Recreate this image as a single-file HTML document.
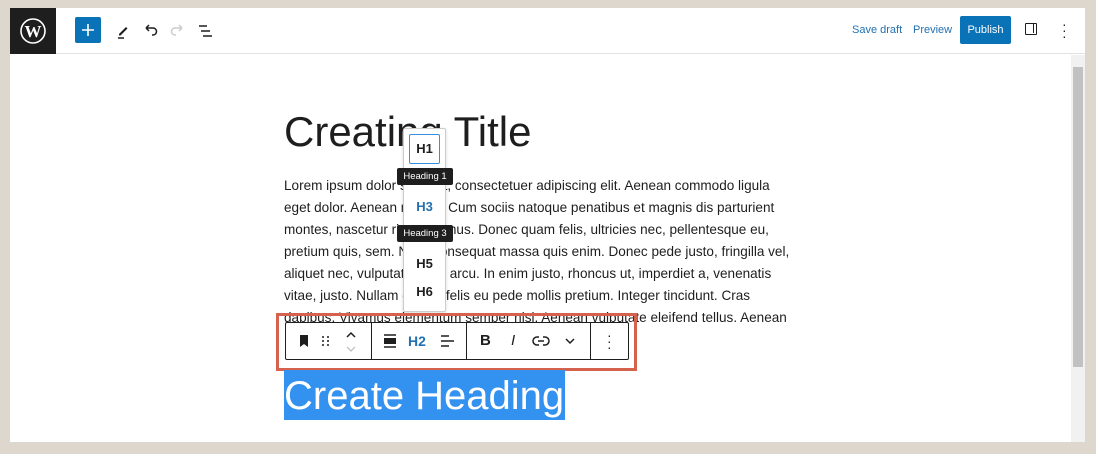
<!DOCTYPE html>
<html><head><meta charset="utf-8"><style>
*{margin:0;padding:0;box-sizing:border-box}
body{width:1096px;height:454px;background:#ddd7cd;position:relative;overflow:hidden;font-family:"Liberation Sans",sans-serif}
.app{position:absolute;left:10px;top:8px;width:1075px;height:434px;background:#fff;overflow:hidden}
.hdr{position:absolute;left:0;top:0;width:1075px;height:46px;border-bottom:1px solid #e2e2e2}
.wp{position:absolute;left:0;top:0;width:46px;height:46px;background:#1e1e1e}
.p{position:absolute;left:274px;font-size:13.55px;color:#1e1e1e;white-space:nowrap;line-height:22px}
.abs{position:absolute}
</style></head><body>
<div class="app">
 <div class="hdr">
  <div class="wp"><svg width="46" height="46" viewBox="0 0 46 46"><circle cx="23" cy="23" r="12" fill="none" stroke="#fff" stroke-width="1.6"/><text x="23" y="29" text-anchor="middle" font-family="Liberation Serif" font-weight="bold" font-size="17" fill="#fff">W</text></svg></div>
  <div class="abs" style="left:65px;top:9px;width:26px;height:26px;background:#0a73b8;border-radius:2px"><svg width="26" height="26"><path d="M13 7v12M7 13h12" stroke="#fff" stroke-width="1.6"/></svg></div>
  <svg class="abs" style="left:101px;top:11px" width="24" height="24" viewBox="0 0 24 24"><path d="M8 15l7-7 1.5 1.5-7 7H8z" fill="#1e1e1e"/><path d="M7 19h6" stroke="#1e1e1e" stroke-width="1.5"/></svg>
  <svg class="abs" style="left:128px;top:11px" width="24" height="24" viewBox="0 0 24 24"><path d="M8 9h7a3.5 3.5 0 0 1 0 7h-1M8 9l3-3M8 9l3 3" fill="none" stroke="#1e1e1e" stroke-width="1.5"/></svg>
  <svg class="abs" style="left:156px;top:11px" width="24" height="24" viewBox="0 0 24 24"><path d="M16 9H9a3.5 3.5 0 0 0 0 7h1M16 9l-3-3M16 9l-3 3" fill="none" stroke="#ccc" stroke-width="1.5"/></svg>
  <svg class="abs" style="left:184px;top:11px" width="24" height="24" viewBox="0 0 24 24"><path d="M5 7h8M7 12h9M9 17h9" stroke="#1e1e1e" stroke-width="1.5"/></svg>
  <div class="abs" style="left:842px;top:16px;font-size:11px;color:#2271b1">Save draft</div>
  <div class="abs" style="left:903px;top:16px;font-size:11px;color:#2271b1">Preview</div>
  <div class="abs" style="left:950px;top:8px;width:51px;height:28px;background:#0a73b8;border-radius:2px;color:#fff;font-size:11px;line-height:28px;text-align:center">Publish</div>
  <div class="abs" style="left:1015px;top:15px;width:12px;height:12px;border:1.5px solid #1e1e1e;border-radius:1px"><div style="position:absolute;right:2px;top:0;width:1.5px;height:9px;background:#1e1e1e"></div></div>
  <div class="abs" style="left:1052px;top:13px;font-size:14px;line-height:6px;color:#1e1e1e">·<br>·<br>·</div>
 </div>
 <div class="abs" style="left:1061px;top:47px;width:14px;height:387px;background:#f1f1f1"><div style="position:absolute;left:2px;top:12px;width:10px;height:300px;background:#c1c1c1"></div></div>
 <div class="abs" style="left:274px;top:99px;font-size:42px;color:#1e1e1e;line-height:50px">Creating Title</div>
 <div class="p" style="top:167px">Lorem ipsum dolor sit amet, consectetuer adipiscing elit. Aenean commodo ligula</div>
 <div class="p" style="top:189px">eget dolor. Aenean massa. Cum sociis natoque penatibus et magnis dis parturient</div>
 <div class="p" style="top:211px">montes, nascetur ridiculus mus. Donec quam felis, ultricies nec, pellentesque eu,</div>
 <div class="p" style="top:233px">pretium quis, sem. Nulla consequat massa quis enim. Donec pede justo, fringilla vel,</div>
 <div class="p" style="top:255px">aliquet nec, vulputate eget, arcu. In enim justo, rhoncus ut, imperdiet a, venenatis</div>
 <div class="p" style="top:277px">vitae, justo. Nullam dictum felis eu pede mollis pretium. Integer tincidunt. Cras</div>
 <div class="p" style="top:299px">dapibus. Vivamus elementum semper nisi. Aenean vulputate eleifend tellus. Aenean</div>
 <div class="abs" style="left:393px;top:120px;width:43px;height:184px;background:#fff;border:1px solid #ccc;border-radius:2px;box-shadow:0 1px 3px rgba(0,0,0,.15)">
  <div class="abs" style="left:5px;top:5px;width:31px;height:30px;border:1.5px solid #3490dc;border-radius:2px;font-weight:bold;font-size:13px;line-height:27px;text-align:center;color:#1e1e1e">H1</div>
  <div class="abs" style="left:0;top:70px;width:41px;text-align:center;font-weight:bold;font-size:13px;color:#2271b1">H3</div>
  <div class="abs" style="left:0;top:127px;width:41px;text-align:center;font-weight:bold;font-size:13px;color:#1e1e1e">H5</div>
  <div class="abs" style="left:0;top:155px;width:41px;text-align:center;font-weight:bold;font-size:13px;color:#1e1e1e">H6</div>
 </div>
 <div class="abs" style="left:387px;top:160px;width:56px;height:17px;background:#1e1e1e;color:#fff;font-size:9.5px;line-height:17px;text-align:center;border-radius:2px">Heading 1</div>
 <div class="abs" style="left:387px;top:217px;width:56px;height:17px;background:#1e1e1e;color:#fff;font-size:9.5px;line-height:17px;text-align:center;border-radius:2px">Heading 3</div>
 <div class="abs" style="left:266px;top:305px;width:361px;height:58px;border:3px solid #d4624c;background:transparent"></div>
 <div class="abs" style="left:275px;top:314px;width:344px;height:38px;border:1px solid #1e1e1e;background:#fff;border-radius:2px">
  <div class="abs" style="left:85px;top:0;width:1px;height:36px;background:#1e1e1e"></div>
  <div class="abs" style="left:180px;top:0;width:1px;height:36px;background:#1e1e1e"></div>
  <div class="abs" style="left:304px;top:0;width:1px;height:36px;background:#1e1e1e"></div>
  <svg class="abs" style="left:10px;top:10px" width="16" height="16"><path d="M4 2h8v12l-4-3-4 3z" fill="#1e1e1e"/></svg>
  <svg class="abs" style="left:34px;top:11px" width="12" height="14"><g fill="#1e1e1e"><circle cx="3" cy="3" r="1"/><circle cx="8" cy="3" r="1"/><circle cx="3" cy="7" r="1"/><circle cx="8" cy="7" r="1"/><circle cx="3" cy="11" r="1"/><circle cx="8" cy="11" r="1"/></g></svg>
  <svg class="abs" style="left:58px;top:6px" width="14" height="26"><path d="M3 8l4-4 4 4" fill="none" stroke="#1e1e1e" stroke-width="1.5"/><path d="M3 18l4 4 4-4" fill="none" stroke="#bbb" stroke-width="1.2"/></svg>
  <svg class="abs" style="left:96px;top:10px" width="16" height="16"><path d="M2 2h12M2 14h12" stroke="#1e1e1e" stroke-width="1.5"/><rect x="2" y="5" width="12" height="6" fill="#1e1e1e"/></svg>
  <div class="abs" style="left:122px;top:10px;font-weight:bold;font-size:14px;color:#2271b1">H2</div>
  <svg class="abs" style="left:153px;top:10px" width="16" height="16"><path d="M2 3h8M2 8h13M2 13h8" stroke="#1e1e1e" stroke-width="1.5"/></svg>
  <div class="abs" style="left:194px;top:9px;font-weight:bold;font-size:15px;color:#1e1e1e">B</div>
  <div class="abs" style="left:225px;top:9px;font-style:italic;font-size:15px;color:#1e1e1e">I</div>
  <svg class="abs" style="left:246px;top:11px" width="18" height="14"><path d="M7 3H5a4 4 0 0 0 0 8h2M11 3h2a4 4 0 0 1 0 8h-2M6 7h6" fill="none" stroke="#1e1e1e" stroke-width="1.5"/></svg>
  <svg class="abs" style="left:278px;top:13px" width="12" height="10"><path d="M2 3l4 4 4-4" fill="none" stroke="#1e1e1e" stroke-width="1.5"/></svg>
  <div class="abs" style="left:321px;top:9px;font-size:14px;line-height:6px;color:#1e1e1e">·<br>·<br>·</div>
 </div>
 <div class="abs" style="left:274px;top:362px;width:281px;height:50px;background:#3391f0;color:#fff;font-size:40px;line-height:52px;white-space:nowrap">Create Heading</div>
</div>
</body></html>
